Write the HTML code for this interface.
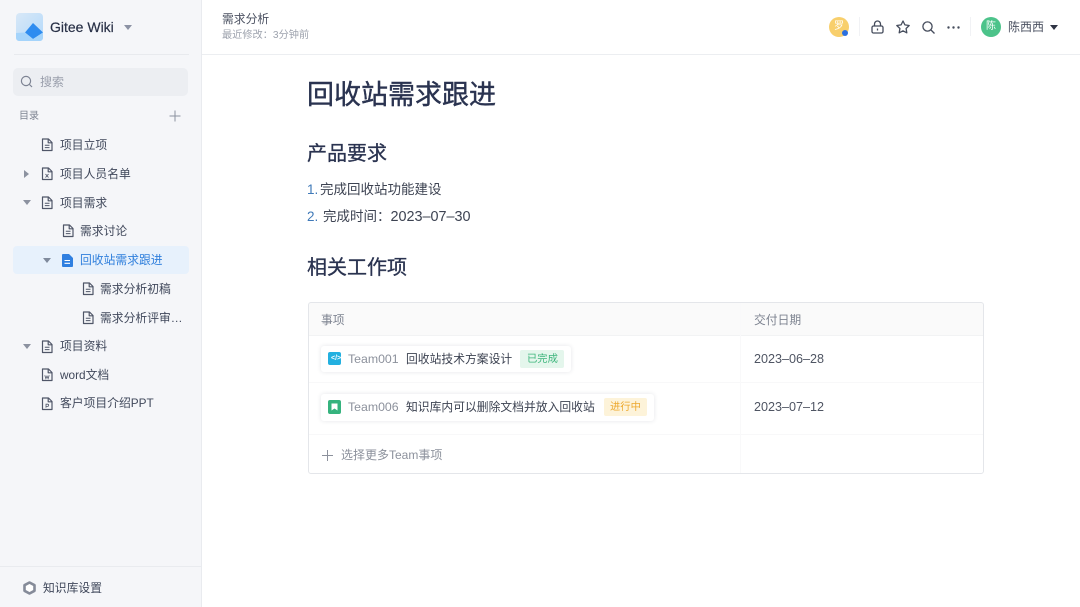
<!DOCTYPE html>
<html lang="zh"><head><meta charset="utf-8">
<style>
html,body{margin:0;padding:0;width:1080px;height:607px;overflow:hidden;background:#fff;font-family:"Liberation Sans","Noto Sans CJK SC",sans-serif}
#w{position:absolute;left:0;top:0;width:1080px;height:607px;overflow:hidden;background:#fff;filter:blur(.35px)}
.t{position:absolute;white-space:nowrap;line-height:20px;height:20px;color:#40485b;font-size:11.8px}
.b{position:absolute}
svg{position:absolute;overflow:visible}
</style></head><body><div id="w">
<!-- sidebar -->
<div class="b" style="left:0;top:0;width:201px;height:607px;background:#f5f6f9;border-right:1px solid #e9ebef"></div>
<div class="b" style="left:16px;top:13px;width:27px;height:28px;border-radius:4px;background:linear-gradient(135deg,#d8e8f7,#b3d9fb)"></div>
<svg style="left:16px;top:13px" width="27" height="28"><path d="M9 19.5L17 10L27 19.5L17 26Z" fill="#2e8cf0"/><path d="M0 20L9 19.5L17 26L27 19.5V25a3 3 0 0 1-3 3H3a3 3 0 0 1-3-3Z" fill="#a5d4fb"/></svg>
<div class="t" style="left:50px;top:17px;font-size:14px;font-weight:400;color:#283046;-webkit-text-stroke:.2px #283046">Gitee Wiki</div>
<svg style="left:124px;top:25px" width="8" height="5"><path d="M0 0H8L4 5Z" fill="#8c92a4"/></svg>
<div class="b" style="left:14px;top:54px;width:175px;height:1px;background:#e8eaee"></div>
<div class="b" style="left:13px;top:68px;width:175px;height:28px;border-radius:5px;background:#eceef2"></div>
<svg style="left:20px;top:75px" width="14" height="14" fill="none" stroke="#7e8494" stroke-width="1.2"><circle cx="6" cy="6" r="4.6"/><path d="M9.5 9.5L12 12"/></svg>
<div class="t" style="left:40px;top:72px;color:#9a9fac;font-size:12px">搜索</div>
<div class="t" style="left:19px;top:107px;font-size:10px;color:#7f8593">目录</div>
<svg style="left:169px;top:110px" width="12" height="12" stroke="#8c92a0" stroke-width="1"><path d="M6 0.5V11.5M0.5 6H11.5"/></svg>
<div class="b" style="left:13px;top:246px;width:176px;height:28px;border-radius:4px;background:#e7f1fc"></div>

<svg width="0" height="0" style="position:absolute"><defs>
<g id="doc" fill="none" stroke="#4f5668" stroke-width="1.2" stroke-linejoin="round"><path d="M1.5 1h6l3.5 3.5V12.5H1.5Z"/><path d="M7.2 1V4.8H11"/><path d="M3.8 7.2H8.5M3.8 9.6H8.5" stroke-width="1"/></g>
<g id="xd" fill="none" stroke="#4f5668" stroke-width="1.2" stroke-linejoin="round"><path d="M1.5 1h6l3.5 3.5V12.5H1.5Z"/><path d="M7.2 1V4.8H11"/></g>
</defs></svg>

<svg style="left:41px;top:138px" width="13" height="14"><use href="#doc"/></svg>
<div class="t" style="left:60px;top:135px">项目立项</div>
<svg style="left:24px;top:170px" width="5" height="8"><path d="M0 0L5 4L0 8Z" fill="#8c92a0"/></svg>
<svg style="left:41px;top:167px" width="13" height="14"><use href="#xd"/><path d="M4.5 7L7.5 10.5M7.5 7L4.5 10.5" stroke="#4f5668" stroke-width=".9"/></svg>
<div class="t" style="left:60px;top:164px">项目人员名单</div>
<svg style="left:23px;top:200px" width="8" height="5"><path d="M0 0H8L4 5Z" fill="#8c92a0"/></svg>
<svg style="left:41px;top:196px" width="13" height="14"><use href="#doc"/></svg>
<div class="t" style="left:60px;top:193px">项目需求</div>
<svg style="left:62px;top:224px" width="13" height="14"><use href="#doc"/></svg>
<div class="t" style="left:80px;top:221px">需求讨论</div>
<svg style="left:43px;top:258px" width="8" height="5"><path d="M0 0H8L4 5Z" fill="#7f8a9c"/></svg>
<svg style="left:61px;top:253px" width="13" height="14"><path d="M1 2a1 1 0 0 1 1-1h6l4 4v8a1 1 0 0 1-1 1H2a1 1 0 0 1-1-1Z" fill="#2f7fe0"/><path d="M3.5 7.5H9M3.5 10.3H9" stroke="#fff" stroke-width="1.1"/></svg>
<div class="t" style="left:80px;top:250px;color:#2f7fdc">回收站需求跟进</div>
<svg style="left:82px;top:282px" width="13" height="14"><use href="#doc"/></svg>
<div class="t" style="left:100px;top:279px">需求分析初稿</div>
<svg style="left:82px;top:311px" width="13" height="14"><use href="#doc"/></svg>
<div class="t" style="left:100px;top:308px">需求分析评审…</div>
<svg style="left:23px;top:344px" width="8" height="5"><path d="M0 0H8L4 5Z" fill="#8c92a0"/></svg>
<svg style="left:41px;top:340px" width="13" height="14"><use href="#doc"/></svg>
<div class="t" style="left:60px;top:336px">项目资料</div>
<svg style="left:41px;top:368px" width="13" height="14"><use href="#xd"/><path d="M3.8 7.2L4.9 10.6L6 8L7.1 10.6L8.2 7.2" fill="none" stroke="#4f5668" stroke-width=".8"/></svg>
<div class="t" style="left:60px;top:365px">word文档</div>
<svg style="left:41px;top:397px" width="13" height="14"><use href="#xd"/><path d="M5 10.8V7.2H6.6a1 1 0 0 1 0 2.2H5" fill="none" stroke="#4f5668" stroke-width=".8"/></svg>
<div class="t" style="left:60px;top:393px">客户项目介绍PPT</div>

<div class="b" style="left:0;top:566px;width:201px;height:1px;background:#e9ebef"></div>
<svg style="left:23px;top:581px" width="13" height="14"><path d="M6.5 1.5L11.5 4.2V9.8L6.5 12.5L1.5 9.8V4.2Z" fill="#fff" stroke="#858b99" stroke-width="2.6" stroke-linejoin="round"/></svg>
<div class="t" style="left:43px;top:578px">知识库设置</div>

<!-- header -->
<div class="b" style="left:202px;top:54px;width:878px;height:1px;background:#eceef1"></div>
<div class="t" style="left:222px;top:9px;color:#4a5060">需求分析</div>
<div class="t" style="left:222px;top:26px;font-size:10.2px;color:#9ea3ae">最近修改：3分钟前</div>
<div class="b" style="left:829px;top:17px;width:20px;height:20px;border-radius:50%;background:#f8cf6c"></div>
<div class="t" style="left:834px;top:17px;font-size:10px;color:#fff">罗</div>
<div class="b" style="left:842px;top:30px;width:6px;height:6px;border-radius:50%;background:#2b6fe0"></div>
<div class="b" style="left:859px;top:17px;width:1px;height:19px;background:#f1f2f5"></div>
<svg style="left:871px;top:20px" width="13" height="14" fill="none" stroke="#454c5c" stroke-width="1.3"><rect x="1" y="6" width="11" height="7" rx="1.5"/><path d="M3.5 6V4a3 3 0 0 1 6 0V6"/><path d="M6.5 8.5V10.5"/></svg>
<svg style="left:896px;top:20px" width="14" height="14" fill="none" stroke="#454c5c" stroke-width="1.3" stroke-linejoin="round"><path d="M7 1L8.9 4.9L13.2 5.5L10.1 8.5L10.8 12.8L7 10.8L3.2 12.8L3.9 8.5L.8 5.5L5.1 4.9Z"/></svg>
<svg style="left:922px;top:21px" width="13" height="13" fill="none" stroke="#454c5c" stroke-width="1.3"><circle cx="5.5" cy="5.5" r="4.6"/><path d="M9 9L12.5 12.5"/></svg>
<svg style="left:947px;top:26px" width="13" height="3" fill="#454c5c"><circle cx="1.5" cy="1.5" r="1.2"/><circle cx="6.5" cy="1.5" r="1.2"/><circle cx="11.5" cy="1.5" r="1.2"/></svg>
<div class="b" style="left:970px;top:17px;width:1px;height:19px;background:#f1f2f5"></div>
<div class="b" style="left:981px;top:17px;width:20px;height:20px;border-radius:50%;background:#4cc38a"></div>
<div class="t" style="left:986px;top:17px;font-size:10px;color:#fff">陈</div>
<div class="t" style="left:1008px;top:17px;color:#4a5060;font-size:12px">陈西西</div>
<svg style="left:1050px;top:25px" width="8" height="5"><path d="M0 0H8L4 5Z" fill="#2f3444"/></svg>

<!-- content -->
<div class="t" style="left:307px;top:79px;font-size:27px;line-height:32px;height:32px;font-weight:400;color:#2a3350;-webkit-text-stroke:.4px #2a3350">回收站需求跟进</div>
<div class="t" style="left:307px;top:141px;font-size:20px;line-height:26px;height:26px;color:#2a3350;-webkit-text-stroke:.3px #2a3350">产品要求</div>
<div class="t" style="left:307px;top:180px;font-size:13.5px;color:#3f79b8">1.</div>
<div class="t" style="left:320px;top:180px;font-size:13.5px;color:#3d4352">完成回收站功能建设</div>
<div class="t" style="left:307px;top:207px;font-size:13.5px;color:#3f79b8">2.</div>
<div class="t" style="left:323px;top:207px;font-size:13.5px;color:#3d4352">完成时间：<span style="font-size:14.4px">2023–07–30</span></div>
<div class="t" style="left:307px;top:255px;font-size:20px;line-height:26px;height:26px;color:#2a3350;-webkit-text-stroke:.3px #2a3350">相关工作项</div>

<!-- table -->
<div class="b" style="left:309px;top:303px;width:674px;height:32px;background:#fafafa;border-bottom:1px solid #f2f3f4"></div>
<div class="b" style="left:308px;top:302px;width:674px;height:170px;border:1px solid #e4e6ea;border-radius:3px"></div>
<div class="b" style="left:309px;top:382px;width:674px;height:1px;background:#f8f8f9"></div>
<div class="b" style="left:309px;top:434px;width:674px;height:1px;background:#f8f8f9"></div>
<div class="b" style="left:740px;top:303px;width:1px;height:170px;background:#f9f9fa"></div>
<div class="t" style="left:321px;top:310px;color:#7d8390">事项</div>
<div class="t" style="left:754px;top:310px;color:#7d8390">交付日期</div>

<div class="b" style="left:321px;top:346px;width:250px;height:26px;background:#fff;border-radius:3px;box-shadow:0 0 5px rgba(40,50,70,.12)"></div>
<div class="b" style="left:328px;top:352px;width:13px;height:13px;border-radius:2px;background:#23b0e0"></div>
<div class="t" style="left:331px;top:349px;font-size:7px;color:#fff;font-weight:700">&lt;/&gt;</div>
<div class="t" style="left:348px;top:349px;color:#8c919c;font-size:12.3px">Team001</div>
<div class="t" style="left:406px;top:349px;color:#3d4352">回收站技术方案设计</div>
<div class="b" style="left:520px;top:350px;width:44px;height:18px;border-radius:2px;background:#e4f6ec"></div>
<div class="t" style="left:527px;top:350px;font-size:10.3px;color:#3cb57b">已完成</div>
<div class="t" style="left:754px;top:349px;color:#4f5563;font-size:12.6px">2023–06–28</div>

<div class="b" style="left:321px;top:394px;width:333px;height:27px;background:#fff;border-radius:3px;box-shadow:0 0 5px rgba(40,50,70,.12)"></div>
<div class="b" style="left:328px;top:400px;width:13px;height:14px;border-radius:2px;background:#35b37e"></div>
<svg style="left:331px;top:403px" width="7" height="8"><path d="M.5.5H6.5V7.5L3.5 5.5L.5 7.5Z" fill="#fff"/></svg>
<div class="t" style="left:348px;top:397px;color:#8c919c;font-size:12.3px">Team006</div>
<div class="t" style="left:406px;top:397px;color:#3d4352">知识库内可以删除文档并放入回收站</div>
<div class="b" style="left:604px;top:398px;width:43px;height:18px;border-radius:2px;background:#fdf3d9"></div>
<div class="t" style="left:610px;top:398px;font-size:10.3px;color:#eda92f">进行中</div>
<div class="t" style="left:754px;top:397px;color:#4f5563;font-size:12.6px">2023–07–12</div>

<svg style="left:322px;top:450px" width="11" height="11" stroke="#8c919c" stroke-width="1"><path d="M5.5 0V11M0 5.5H11"/></svg>
<div class="t" style="left:341px;top:445px;color:#8c919c;font-size:12px">选择更多Team事项</div>
</div></body></html>
